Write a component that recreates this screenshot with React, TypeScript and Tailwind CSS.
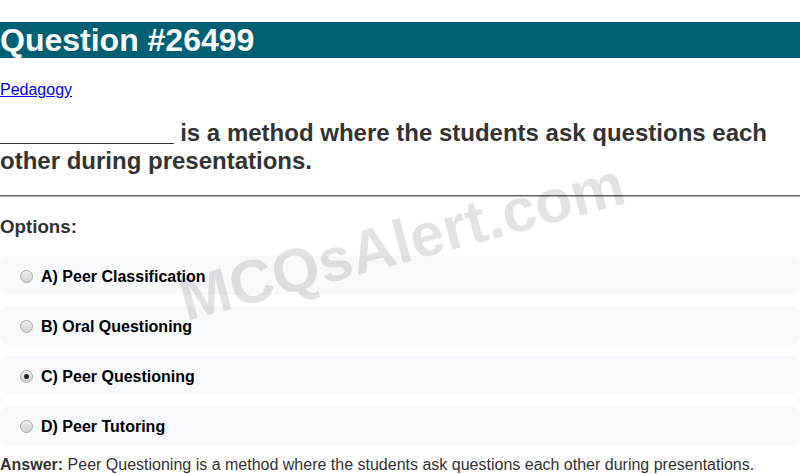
import React from "react";

const options = [
  { label: "A) Peer Classification", checked: false },
  { label: "B) Oral Questioning", checked: false },
  { label: "C) Peer Questioning", checked: true },
  { label: "D) Peer Tutoring", checked: false },
];

function Radio({ checked }: { checked: boolean }) {
  return (
    <span className="relative inline-block w-[13px] h-[13px] shrink-0 rounded-full border border-[#a9a9a9] bg-gradient-to-b from-[#e8e8e8] to-[#d4d4d4] shadow-[inset_0_1px_1px_rgba(255,255,255,0.7)]">
      {checked && (
        <span className="absolute left-[3px] top-[3px] w-[5px] h-[5px] rounded-full bg-[#222]" />
      )}
    </span>
  );
}

export default function App() {
  return (
    <div className="relative w-[800px] h-[474px] overflow-hidden bg-white font-['Liberation_Sans',Arial,sans-serif] text-[16px]">
      <div className="h-[22px]" />
      <h1 className="bg-[#016174] text-white text-[32px] font-bold leading-[36px] h-[36px]">
        Question #26499
      </h1>
      <div className="pt-[23px] leading-[18px]">
        <a href="#" className="text-[#0000ee] underline">Pedagogy</a>
      </div>
      <h2 className="mt-[20px] text-[24px] font-bold leading-[28px] text-[#333]">
        _____________ is a method where the students ask questions each other during presentations.
      </h2>
      <div className="mt-[20px] h-[2px] border-t border-t-[#666] border-b border-b-[#aaa]" />
      <h3 className="mt-[19px] text-[18.72px] font-bold leading-[22px] text-[#333]">Options:</h3>
      <div className="mt-[18px] flex flex-col gap-[11px]">
        {options.map((o) => (
          <div
            key={o.label}
            className="h-[39px] rounded-[8px] bg-[#f8f9fd] flex items-center pt-[1px] pl-[20px] gap-[8px]"
          >
            <Radio checked={o.checked} />
            <span className="font-bold text-black leading-[18px] pt-[1px]">{o.label}</span>
          </div>
        ))}
      </div>
      <p className="mt-[11px] text-[#333] leading-[18px]">
        <b>Answer:</b> Peer Questioning is a method where the students ask questions each other during presentations.
      </p>
      <div className="pointer-events-none absolute left-[402px] top-[242px] -translate-x-1/2 -translate-y-1/2 -rotate-[15deg] whitespace-nowrap text-[61px] font-bold leading-none text-[rgba(0,0,0,0.11)]">
        MCQsAlert.com
      </div>
    </div>
  );
}
